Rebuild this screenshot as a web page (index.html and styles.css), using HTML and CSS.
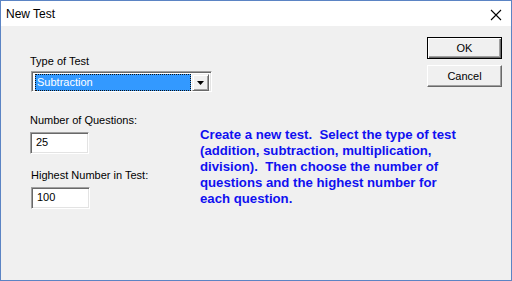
FILE: index.html
```html
<!DOCTYPE html>
<html lang="en">
<head>
    <meta charset="UTF-8">
    <meta name="viewport" content="width=device-width, initial-scale=1.0">
    <title>New Test</title>
    <link rel="stylesheet" href="styles.css">
</head>
<body>
    <div class="window">
        <!-- Title bar -->
        <div class="title-bar">
            <span class="title">New Test</span>
            <svg class="close" width="12" height="12" viewBox="0 0 12 12">
                <path d="M1 1 L11 11 M11 1 L1 11" stroke="#000" stroke-width="1.1" fill="none"/>
            </svg>
        </div>

        <div class="dialog">
            <!-- Fields -->
            <div class="fields">
                <label class="field-label">Type of Test</label>
                <div class="combo">
                    <div class="combo-value"><span class="focus">Subtraction</span></div>
                    <div class="combo-btn">
                        <svg width="7" height="4" viewBox="0 0 7 4"><path d="M0 0 H7 L3.5 4 Z" fill="#000"/></svg>
                    </div>
                </div>

                <label class="field-label gap">Number of Questions:</label>
                <div class="textbox">25</div>

                <label class="field-label gap-small shift">Highest Number in Test:</label>
                <div class="textbox shift">100</div>
            </div>

            <div class="side">
                <!-- Buttons -->
                <div class="buttons">
                    <button class="btn default">OK</button>
                    <button class="btn">Cancel</button>
                </div>

                <!-- Help text -->
                <p class="help">Create a new test.&nbsp; Select the type of test (addition, subtraction, multiplication, division).&nbsp; Then choose the number of questions and the highest number for each question.</p>
            </div>
        </div>
    </div>
</body>
</html>
```

FILE: styles.css
```css
* {
    box-sizing: border-box;
}

body {
    margin: 0;
    font-family: "Liberation Sans", Arial, sans-serif;
    background-color: #f0f0f0;
}

.window {
    width: 512px;
    height: 281px;
    border: 1px solid #5b84c4;
    background-color: #f0f0f0;
    display: flex;
    flex-direction: column;
}

.title-bar {
    height: 25px;
    background-color: #fff;
    display: flex;
    align-items: center;
    justify-content: space-between;
    padding: 0 9px 0 5px;
}

.title {
    font-size: 12px;
    color: #000;
    margin-top: 1px;
}

.close {
    margin-top: 2px;
}

.dialog {
    flex: 1;
    display: flex;
    align-items: flex-start;
}

.fields {
    width: 170px;
    flex-shrink: 0;
    margin-left: 29px;
    padding-top: 29px;
    display: flex;
    flex-direction: column;
    align-items: flex-start;
}

.field-label {
    font-size: 11px;
    line-height: 13px;
    color: #000;
    white-space: nowrap;
}

.field-label.gap {
    margin-top: 22px;
}

.field-label.gap-small {
    margin-top: 15px;
}

.shift {
    margin-left: 1px;
}

/* Sunken 3D border used by combo and text boxes */
.combo,
.textbox {
    border: 1px solid;
    border-color: #a0a0a0 #fff #fff #a0a0a0;
    box-shadow: inset 1px 1px 0 #696969, inset -1px -1px 0 #e3e3e3;
    background-color: #fff;
}

.combo {
    width: 181px;
    height: 21px;
    flex-shrink: 0;
    margin-top: 3px;
    margin-left: 1px;
    display: flex;
    padding: 2px;
}

.combo-value {
    flex: 1;
    padding: 0 1px 0 1px;
}

.focus {
    display: block;
    height: 17px;
    background-color: #3399ff;
    color: #fff;
    font-size: 11px;
    line-height: 15px;
    padding-left: 1px;
    border: 1px dotted #111;
}

.combo-btn {
    width: 17px;
    height: 17px;
    background-color: #f0f0f0;
    border: 1px solid;
    border-color: #f0f0f0 #696969 #696969 #f0f0f0;
    box-shadow: inset 1px 1px 0 #fff, inset -1px -1px 0 #a0a0a0;
    display: flex;
    align-items: center;
    justify-content: center;
}

.textbox {
    width: 59px;
    height: 22px;
    margin-top: 5px;
    font-size: 11px;
    line-height: 18px;
    padding-left: 5px;
    color: #000;
}

.side {
    flex: 1;
    display: flex;
    flex-direction: column;
}

.buttons {
    align-self: flex-end;
    margin-right: 9px;
    padding-top: 11px;
    display: flex;
    flex-direction: column;
    gap: 6px;
}

.help {
    width: 265px;
    margin: 40px 0 0 0;
    font-size: 13.2px;
    font-weight: bold;
    line-height: 16px;
    color: #1010f0;
}

.btn {
    width: 75px;
    height: 22px;
    font-family: "Liberation Sans", Arial, sans-serif;
    font-size: 11px;
    color: #000;
    background-color: #f0f0f0;
    border: 1px solid;
    border-color: #fff #696969 #696969 #fff;
    box-shadow: inset -1px -1px 0 #a0a0a0;
    padding: 0;
}

.btn.default {
    border: 1px solid #000;
    box-shadow: inset 1px 1px 0 #fff, inset -1px -1px 0 #696969, inset -2px -2px 0 #a0a0a0;
}
```
